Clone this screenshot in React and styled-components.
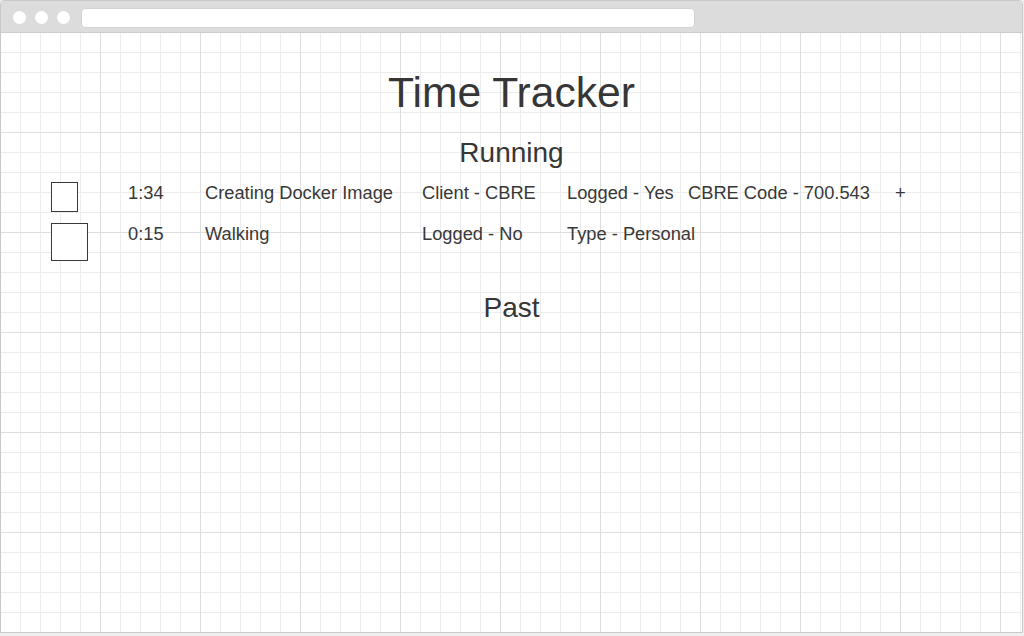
import React from "react";
import styled, { createGlobalStyle } from "styled-components";

const GlobalStyle = createGlobalStyle`
  html, body {
    margin: 0;
    padding: 0;
    background: #efefef;
  }
  body {
    font-family: "Liberation Sans", Arial, Helvetica, sans-serif;
    color: #383838;
  }
`;

const running = [
  {
    id: 1,
    box: { w: 27, h: 30 },
    cells: [
      "1:34",
      "Creating Docker Image",
      "Client - CBRE",
      "Logged - Yes",
      "CBRE Code - 700.543",
      "+",
    ],
  },
  {
    id: 2,
    box: { w: 37, h: 38 },
    cells: ["0:15", "Walking", "Logged - No", "Type - Personal"],
  },
];

const App = () => {
  return (
    <React.Fragment>
      <GlobalStyle />
      <Window>
        <TopBar>
          <Dot />
          <Dot />
          <Dot />
          <AddressBar />
        </TopBar>
        <Canvas>
          <Title>Time Tracker</Title>
          <Heading>Running</Heading>
          <Rows>
            {running.map((r) => (
              <Row key={r.id}>
                <Check $w={r.box.w} $h={r.box.h} />
                {r.cells.map((c, i) => (
                  <Cell key={i}>{c}</Cell>
                ))}
              </Row>
            ))}
          </Rows>
          <Heading $top={31}>Past</Heading>
        </Canvas>
      </Window>
    </React.Fragment>
  );
};

const Window = styled.div`
  width: 1021px;
  height: 631px;
  border: 1px solid #c9c9c9;
  border-radius: 4px 4px 0 0;
  background: #fff;
  display: flex;
  flex-direction: column;
  overflow: hidden;
`;

const TopBar = styled.div`
  height: 32px;
  flex: none;
  box-sizing: border-box;
  padding: 2px 12px 0 12px;
  background: #dcdcdc;
  border-bottom: 1px solid #cdcdcd;
  display: flex;
  align-items: center;
  gap: 9px;
`;

const Dot = styled.span`
  width: 13px;
  height: 13px;
  border-radius: 50%;
  background: #fff;
`;

const AddressBar = styled.div`
  width: 614px;
  height: 20px;
  margin-left: 2px;
  background: #fff;
  border: 1px solid #d2d2d2;
  box-sizing: border-box;
  border-radius: 4px;
`;

const Canvas = styled.div`
  flex: 1;
  padding-top: 35px;
  background-color: #fff;
  background-image: linear-gradient(to right, transparent 99px, #dedede 99px),
    linear-gradient(to bottom, transparent 99px, #dedede 99px),
    linear-gradient(to right, transparent 19px, #ececec 19px),
    linear-gradient(to bottom, transparent 19px, #ececec 19px);
  background-size: 100px 100px, 100px 100px, 20px 20px, 20px 20px;
`;

const Title = styled.h1`
  margin: 0;
  text-align: center;
  font-size: 42.6px;
  line-height: 48px;
  font-weight: normal;
  color: #363636;
`;

const Heading = styled.h2`
  margin: ${(p) => p.$top || 21}px 0 0 0;
  text-align: center;
  font-size: 28px;
  line-height: 32px;
  font-weight: normal;
  color: #363636;
`;

const Rows = styled.div`
  margin-top: 13px;
  padding-left: 50px;
  display: flex;
  flex-direction: column;
  gap: 11px;
`;

const Row = styled.div`
  display: grid;
  grid-template-columns: 77px 77px 217px 145px 121px 207px auto;
  align-items: start;
`;

const Check = styled.div`
  width: ${(p) => p.$w}px;
  height: ${(p) => p.$h}px;
  box-sizing: border-box;
  border: 1px solid #3a3a3a;
  background: #fff;
`;

const Cell = styled.div`
  font-size: 18.3px;
  line-height: 22px;
  color: #383838;
  white-space: nowrap;
`;

export default App;
